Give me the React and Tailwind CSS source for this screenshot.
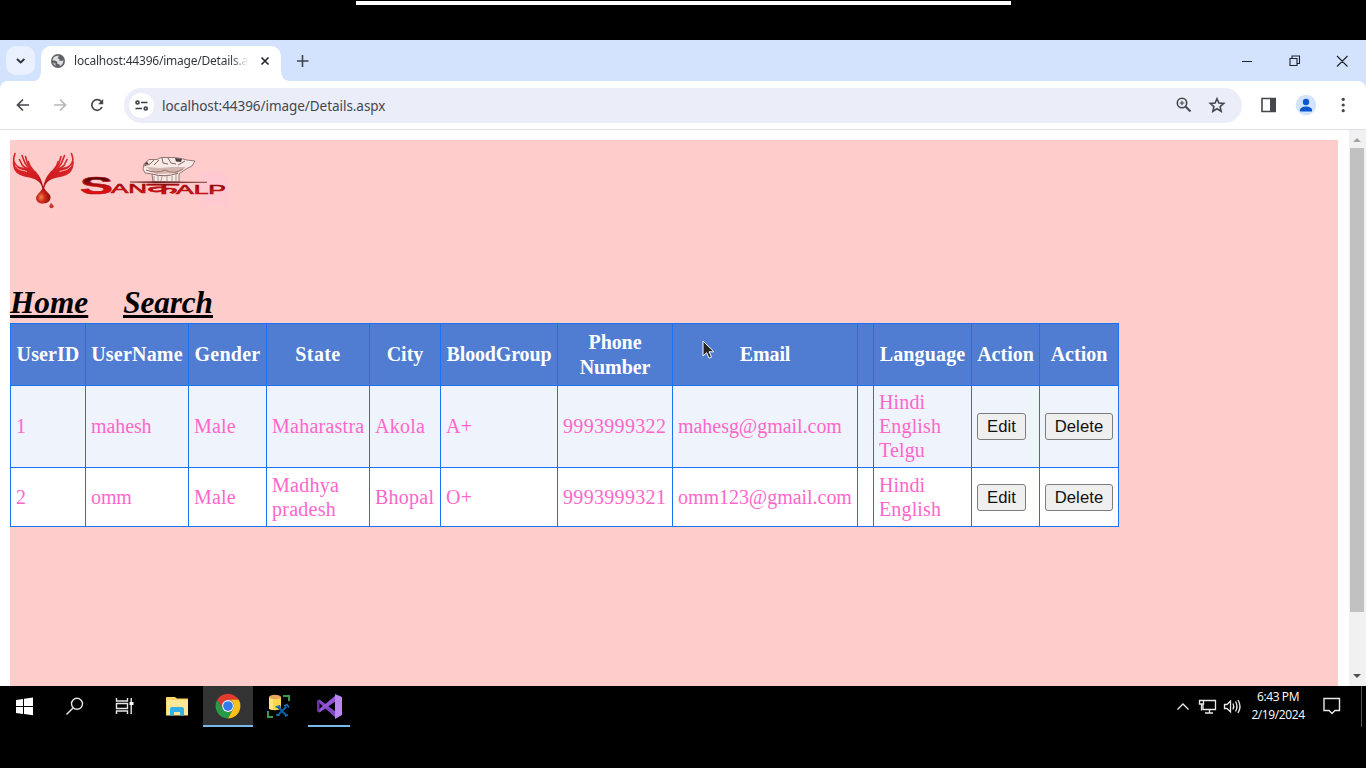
import React from "react";

const columns = [
  { label: "UserID", track: "tracking-[0.1px]" },
  { label: "UserName", track: "tracking-[0.2px]" },
  { label: "Gender", track: "tracking-[0.25px]" },
  { label: "State", track: "tracking-[0.4px]" },
  { label: "City", track: "tracking-[0px]" },
  { label: "BloodGroup", track: "tracking-[-0.15px]" },
  { label: "Phone Number", track: "tracking-[-0.1px]" },
  { label: "Email", track: "tracking-[-0.1px]" },
  { label: "", track: "" },
  { label: "Language", track: "tracking-[0.15px]" },
  { label: "Action", track: "tracking-[0px]" },
  { label: "Action", track: "tracking-[0px]" },
];

const rows = [
  {
    cells: ["1", "mahesh", "Male", "Maharastra", "Akola", "A+", "9993999322", "mahesg@gmail.com", ""],
    languages: ["Hindi", "English", "Telgu"],
    style: "h-[82px] bg-[#eff3fb]",
    pad: "pb-0.5",
  },
  {
    cells: ["2", "omm", "Male", "Madhya pradesh", "Bhopal", "O+", "9993999321", "omm123@gmail.com", ""],
    languages: ["Hindi", "English"],
    style: "h-[59px] bg-white",
    pad: "pb-0",
  },
];

const cellTracking = [
  "tracking-[0px]",
  "tracking-[-0.1px]",
  "tracking-[0.2px]",
  "tracking-[0.25px]",
  "tracking-[0.25px]",
  "tracking-[0.2px]",
  "tracking-[0.32px]",
  "tracking-[-0.04px]",
  "",
];

function Logo() {
  return (
    <svg width="226" height="72" viewBox="8 144 226 72" className="-ml-0.5 block">
      <defs>
        <linearGradient id="hand" x1="0" y1="0" x2="1" y2="1">
          <stop offset="0" stopColor="#e0282c" />
          <stop offset="0.6" stopColor="#cf1c20" />
          <stop offset="1" stopColor="#7d1013" />
        </linearGradient>
        <linearGradient id="word" x1="0" y1="0" x2="0" y2="1">
          <stop offset="0.3" stopColor="#5a0707" />
          <stop offset="0.55" stopColor="#c80c10" />
          <stop offset="0.85" stopColor="#f00d10" />
        </linearGradient>
        <radialGradient id="drop" cx="0.35" cy="0.65" r="0.65">
          <stop offset="0" stopColor="#f08a55" />
          <stop offset="0.4" stopColor="#cf2a18" />
          <stop offset="1" stopColor="#8a0d0c" />
        </radialGradient>
      </defs>
      <rect x="203" y="172" width="25" height="33" fill="#ffc6d6" opacity="0.6" />
      <g id="palm">
        <path d="M12.800 162 C12.800 168 15 173 20 175 C27 178 34 177 39 182 C42 185 43 189 43 196 L44 196 C44 187 42 179 37 173 C34 169 30 167.500 25 167.500 C20 167.500 16.500 166 14.700 161 Z" fill="url(#hand)" />
        <g fill="none" stroke="#d52529" strokeWidth="1.600" strokeLinecap="round">
          <path d="M15 153.500 C13.500 157 13.300 160 13.700 163" />
          <path d="M19.500 159.500 L22.500 165.500 L27 169" />
          <path d="M22 155.500 L25 163 L29 168.500" />
          <path d="M25.500 156.500 L27.500 163.500 L31 169" />
          <path d="M28.300 161.500 L30 166 L33 170" />
        </g>
        <path d="M15.500 165.500 C18 170.500 23 170 27 171.500" fill="none" stroke="#ffb9b9" strokeWidth="1" />
      </g>
      <use href="#palm" transform="matrix(-1 0 0 1 86.500 0)" />
      <path d="M43.500 188 C43 193 36 197 36 200.500 C36.500 205 40 206.500 43.500 206 C48 206 51 203 50.500 199 C50 196 44 193 43.500 188Z" transform="translate(0 -2.500)" fill="url(#drop)" />
      <path d="M51 202.500 C51 204 49.300 205 49.300 206.500 C49.500 208.800 53.500 208.800 53.700 206.200 C53.700 204.800 51.500 204.500 51 202.500Z" fill="#c9382d" />
      <g strokeLinejoin="round">
        <path d="M143 169 L144 164 L149 159.500 L157 159.500 L161 157.500 L174 157.500 L181 158.500 L187 160 L195 161 L192 166 L186 169 L179 174 L179 182 L153 182 L152 174 L145 173 Z" fill="#f7e9e4" stroke="#7b5e5a" strokeWidth="0.8" />
        <path d="M144 166 l6 -2 4 -4 M154 165 l5 -5 M162 158 l1 5 5 1 M168 158 l3 5 5 1 M178 165 l7 -4 M146 170 q10 4 19 0 q9 5 18 -1 M152 174 q13 4 26 -1" fill="none" stroke="#785653" strokeWidth="0.9" />
        <path d="M175 158 L182 159 L181 162 L176 161.500Z M144 165 L147 161.500 L148.500 164Z" fill="#4b4040" />
        <path d="M154 176 v5 M158 176 v5 M162 176 l-1 5 M167 175 v6 M172 176 v5 M176 174 v7" stroke="#9d837f" strokeWidth="0.8" />
        <path d="M146 167 L160 168 L172 167 L186 167 L178 173 L156 174Z" fill="#b28a82" opacity="0.55" />
      </g>
      <path d="M130 182 L155 181.500 L207 182.300 L155 183Z" fill="#6e2020" stroke="#6e2020" strokeWidth="0.5" />
      <g fill="url(#word)" fontFamily="'Liberation Sans', Arial, sans-serif" stroke="#b51114" strokeWidth="0.6">
        <text x="80" y="193.500" fontSize="24" fontWeight="700" textLength="33" lengthAdjust="spacingAndGlyphs">S</text>
        <text x="111" y="193" fontSize="13" textLength="36" lengthAdjust="spacingAndGlyphs">AN</text>
        <text x="147" y="193.500" fontSize="16" fontFamily="'Noto Sans', 'Noto Sans Devanagari', sans-serif" textLength="31" lengthAdjust="spacingAndGlyphs">क</text>
        <text x="176" y="193.500" fontSize="12.500" textLength="50" lengthAdjust="spacingAndGlyphs">ALP</text>
      </g>
    </svg>
  );
}

function ChromeIcon() {
  return (
    <svg width="26" height="26" viewBox="0 0 48 48">
      <path d="M24 13 H43.900 A23 23 0 0 0 4.100 12.500 L14.500 29.500 A11 11 0 0 1 24 13Z" fill="#e33b2e" />
      <path d="M4.100 12.500 A23 23 0 0 0 24 47 L33.500 29.500 A11 11 0 0 1 14.500 29.500Z" fill="#289b49" />
      <path d="M24 47 A23 23 0 0 0 43.900 12.500 H24 A11 11 0 0 1 33.500 29.500Z" fill="#fbc116" />
      <circle cx="24" cy="24" r="11" fill="#fff" />
      <circle cx="24" cy="24" r="9" fill="#317bea" />
    </svg>
  );
}

function TabStrip() {
  return (
    <div className="flex h-[41px] bg-[#d3e3fd] pl-1.5 pt-1.5">
      <button className="flex h-[29px] w-[29px] items-center justify-center rounded-[10px] bg-[#e9f1fe]">
        <svg width="29" height="29" fill="none" stroke="#30343a" strokeWidth="1.9"><path d="M11 13l3.700 3.500L18.400 13" /></svg>
      </button>
      <div className="flex h-[35px] w-[260px]">
        <svg width="6" height="35" className="shrink-0"><path d="M0 35 Q6 33 6 25V35Z" fill="#fff" /></svg>
        <div className="flex h-[35px] w-[240px] items-center rounded-t-[10px] bg-white pb-[5px] pl-2.5">
          <svg width="14" height="14" viewBox="0 0 14 14" className="shrink-0">
            <circle cx="7" cy="7" r="7" fill="#5f6368" />
            <path d="M8 1.700 L6.500 4.200 L8.500 5 L8 6.500 L11 7 L12.300 6 Q12.500 10.500 9 12 L8.500 10.500 L6 9.500 L6.500 8 L4 6.500 L1.600 6.500 Q1.600 2.200 6.500 1.700Z" fill="#fff" opacity="0.8" />
            <path d="M2 8.500 L4.500 9.500 L4.500 12 Q2.500 11 2 8.500Z" fill="#fff" opacity="0.6" />
          </svg>
          <div className="ml-[9px] w-[174px] shrink-0 overflow-hidden whitespace-nowrap bg-gradient-to-r from-[#30343a] from-[90%] to-white bg-clip-text font-['Noto_Sans',sans-serif] text-[12px] leading-[18px] tracking-[-0.22px] text-transparent">localhost:44396/image/Details.aspx</div>
          <svg width="10" height="10" className="ml-[12px] shrink-0" stroke="#202329" strokeWidth="1.6"><path d="M1.500 1.500l7 7M8.500 1.500l-7 7" /></svg>
        </div>
        <svg width="10" height="35" className="shrink-0"><path d="M0 25Q0 35 10 35H0Z" fill="#fff" /></svg>
      </div>
      <svg width="12" height="12" className="mt-[9px] ml-0.5" stroke="#40454c" strokeWidth="1.6"><path d="M0 6h12M6 0v12" transform="translate(-0.500 0)" /></svg>
      <svg width="120" height="30" viewBox="1236 46 120 30" className="ml-auto mr-2.5" fill="none" stroke="#202329" strokeWidth="1.1">
        <path d="M1242 61.500h10M1290 58.500h7v7h-7zM1292 58v-2h7.500v7.500H1297M1337 56l10.500 10.500M1347.500 56L1337 66.500" />
      </svg>
    </div>
  );
}

function Toolbar() {
  return (
    <div className="h-[49px] bg-[#d3e3fd]">
      <div className="flex h-[49px] items-center rounded-t-[8px] border-b border-[#dcdfe3] bg-white">
        <svg width="110" height="48" viewBox="0 81 110 48" fill="none" strokeWidth="1.700" className="shrink-0">
          <path d="M29 105H17.500M23 99.500L17.500 105l5.500 5.500" stroke="#44474b" />
          <path d="M54 105h11.500M60 99.500l5.500 5.500-5.500 5.500" stroke="#b5b7ba" />
          <path d="M101.500 102A5.300 5.300 0 1 0 102 107" stroke="#44474b" />
          <path d="M103.200 99v5.300H98Z" fill="#44474b" />
        </svg>
        <div className="ml-[14px] flex h-[35px] w-[1118px] items-center rounded-full bg-[#ebeef8] pl-[5px]">
          <div className="h-[25px] w-[25px] rounded-full bg-white">
            <svg width="25" height="25" fill="none" stroke="#3c4045" strokeWidth="1.7">
              <circle cx="8.500" cy="9.500" r="1.500" /><path d="M12 9.500h6.500M6.500 15.500H13" /><circle cx="16.700" cy="15.500" r="1.500" />
            </svg>
          </div>
          <span className="ml-[8px] whitespace-nowrap pt-px font-['Noto_Sans',sans-serif] text-[13.5px] leading-5 tracking-[-0.05px] text-[#44474d]">localhost:44396/image/Details.aspx</span>
          <svg width="56" height="24" viewBox="1174 93 56 24" className="ml-auto mr-[12px]" fill="none" stroke="#44474b" strokeWidth="1.600">
            <circle cx="1182" cy="103" r="4.700" /><path d="M1185.500 106.500l5 5" strokeWidth="2" /><path d="M1179.700 103h4.600M1182 100.700v4.600" strokeWidth="1.200" />
            <path d="M1217 98.700l1.900 4.400 4.800.4-3.600 3.100 1.100 4.700-4.200-2.500-4.200 2.500 1.100-4.700-3.600-3.100 4.800-.4z" />
          </svg>
        </div>
        <svg width="100" height="34" viewBox="1254 88 100 34" className="ml-3">
          <path d="M1262 98.500h13v13h-13z" fill="none" stroke="#44474b" strokeWidth="1.600" /><path d="M1270 98h6v14h-6z" fill="#44474b" />
          <circle cx="1306" cy="105" r="10.300" fill="#d3e3fd" />
          <circle cx="1306" cy="102" r="3.200" fill="#0b57d0" /><path d="M1300 111.500v-1.500c0-2 3-3.500 6-3.500s6 1.500 6 3.500v1.500z" fill="#0b57d0" />
          <g fill="#44474b"><circle cx="1343.200" cy="99.300" r="1.600" /><circle cx="1343.200" cy="105" r="1.600" /><circle cx="1343.200" cy="110.700" r="1.600" /></g>
        </svg>
      </div>
    </div>
  );
}

function ActionButton({ children, width }) {
  return (
    <button className={`${width} block h-[27px] rounded-[3px] border border-[#7d7d7d] bg-[#efefef] text-center font-['Liberation_Sans',sans-serif] text-[16.67px] leading-[25px] tracking-[0.1px] text-[#111111]`}>
      {children}
    </button>
  );
}

function UsersTable() {
  const cell = "border border-[#1a73f5]";
  return (
    <table className="w-[1109px] table-fixed border-collapse text-[20px]">
      <colgroup>
        <col className="w-[75px]" /><col className="w-[103px]" /><col className="w-[78px]" /><col className="w-[103px]" />
        <col className="w-[71px]" /><col className="w-[117px]" /><col className="w-[115px]" /><col className="w-[185px]" />
        <col className="w-[16px]" /><col className="w-[98px]" /><col className="w-[68px]" /><col className="w-[79px]" />
      </colgroup>
      <thead>
        <tr className="h-[62px] bg-[#507cd1] text-white">
          {columns.map((c, i) => (
            <th key={i} className={`${cell} ${c.track} p-0 text-center font-bold leading-[25px]`}>{c.label}</th>
          ))}
        </tr>
      </thead>
      <tbody className="text-[#ff66cc]">
        {rows.map((r) => (
          <tr key={r.cells[0]} className={r.style}>
            {r.cells.map((c, i) => (
              <td key={i} className={`${cell} ${cellTracking[i]} ${r.pad} px-[5px] pt-0 leading-6`}>{c}</td>
            ))}
            <td className={`${cell} ${r.pad} px-[5px] pt-0 leading-6 tracking-[0.15px]`}>
              {r.languages.map((l) => <div key={l}>{l}</div>)}
            </td>
            <td className={`${cell} py-0 pl-[5px] pr-0`}><ActionButton width="w-[49px]">Edit</ActionButton></td>
            <td className={`${cell} py-0 pl-[5px] pr-0`}><ActionButton width="w-[68px]">Delete</ActionButton></td>
          </tr>
        ))}
      </tbody>
    </table>
  );
}

function Cursor() {
  return (
    <svg width="14" height="20" viewBox="0 0 14 20" className="absolute left-[702px] top-[210px]">
      <path d="M1 1v15l3.600-3.300 2.500 5.500 2.400-1.100-2.500-5.300h5z" fill="#252525" stroke="#fff" strokeWidth="1" />
    </svg>
  );
}

function Page() {
  return (
    <div className="relative flex h-[556px] bg-white font-['Liberation_Serif',serif]">
      <div className="ml-2.5 mt-2.5 h-[546px] w-[1328px] bg-[#ffcccc]">
        <div className="h-[143px] pt-1"><Logo /></div>
        <nav className="flex h-[40px] items-start gap-[35px] text-[31.25px] font-bold italic leading-[40px] text-black underline decoration-[3px] underline-offset-[2px]">
          <a>Home</a>
          <a className="tracking-[-0.1px]">Search</a>
        </nav>
        <UsersTable />
      </div>
      <div className="ml-[11px] flex w-[17px] flex-col items-start bg-[#f1f1f1] pl-px">
        <svg width="16" height="18"><path d="M3 12l4-4 4 4z" fill="#a3a3a3" /></svg>
        <div className="h-[464px] w-[14px] bg-[#c1c1c1]" />
        <svg width="16" height="18" className="mt-auto"><path d="M3 6l4 4 4-4z" fill="#505050" /></svg>
      </div>
      <Cursor />
    </div>
  );
}

function Taskbar() {
  return (
    <div className="flex h-[41px] items-center bg-black text-white">
      <svg width="203" height="41" viewBox="0 686 203 41" className="shrink-0">
        <path d="M16 700l7-1v7h-7zM24 698.800l9-1.300V706h-9zM16 707h7v7l-7-1zM24 707h9v8.300l-9-1.300z" fill="#fff" />
        <g fill="none" stroke="#e8e8e8" strokeWidth="1.400">
          <circle cx="77" cy="703.800" r="5.500" /><path d="M73 708l-6.500 6.500" />
          <path d="M116.500 698v3h11v-3M116.500 714v-3h11v3M116.500 703.500h11v5h-11zM131.200 698v16" />
        </g>
        <path d="M129.500 702h4v3h-4z" fill="#fff" />
        <path d="M166 698q0-1 1-1h8l2 1.500h11v17h-22z" fill="#fbd867" /><path d="M167 700h21v15h-21z" fill="#ffe79a" />
        <path d="M170 715.500v-6.500q0-2 2-2h10q2 0 2 2v6.500h-4v-3.500h-6v3.500z" fill="#35afe5" />
      </svg>
      <div className="flex h-[41px] w-[50px] shrink-0 items-center justify-center border-b-2 border-[#76b9ed] bg-[#333333]">
        <ChromeIcon />
      </div>
      <svg width="53" height="41" viewBox="253 686 53 41" className="shrink-0">
        <path d="M283 696h6v5M268 711v6h5" fill="none" stroke="#3f9848" strokeWidth="2" />
        <path d="M269 697v11c1 3 11 3 12 0v-11z" fill="#fbd64e" /><path d="M269 697v12l4 1v-12z" fill="#ffe57a" />
        <ellipse cx="275" cy="697" rx="6" ry="2.200" fill="#e6a45d" />
        <path d="M277.500 706.500l9 9M286.500 706.500l-9 9" stroke="#0f5c9c" strokeWidth="2.200" /><path d="M275.500 707l4-1 1 3M284 706l3-1.500 2 3M276 715h4M285 716l3-1" stroke="#1670b5" strokeWidth="1.500" fill="none" />
      </svg>
      <div className="ml-[2px] h-[41px] w-[42px] border-b-2 border-[#76b9ed]">
        <svg width="42" height="39" viewBox="308 686 42 39">
          <path d="M317 701l2.500-1.500L336 712v6z" fill="#8147c6" />
          <path d="M317 711l2.500 1.500L336 701v-6z" fill="#9455d6" />
          <path d="M317 701l2.500-1.500v13L317 711z" fill="#69369f" />
          <path d="M335 694l7 3v18l-7 4z" fill="#b986f2" />
        </svg>
      </div>
      <svg width="76" height="30" viewBox="1172 692 76 30" className="ml-auto" fill="none" stroke="#e8e8e8" strokeWidth="1.300">
        <path d="M1177.500 709.500l5.500-5.500 5.500 5.500" />
        <path d="M1204 700.500h11.500v9H1203v-5M1199.500 700.500h4v3.500h-4zM1201.500 704v6.500M1205 713h8M1209.500 710v3" />
        <path d="M1224.500 704.500h2.500l3.500-3.500v11l-3.500-3.500h-2.500zM1233 703.500q1.500 3 0 6M1235.500 701.500q3 5 0 10M1238 700q4 6.500 0 13" />
      </svg>
      <div className="-mt-0.5 w-[60px] whitespace-nowrap text-center font-['Open_Sans',sans-serif] text-[12px] leading-[18px] tracking-[-0.4px]">
        <div>6:43 PM</div>
        <div>2/19/2024</div>
      </div>
      <svg width="36" height="30" viewBox="1314 692 36 30" className="ml-[6px] mr-[11px]" fill="none" stroke="#e8e8e8" strokeWidth="1.400">
        <path d="M1324 698.500h15.500v12h-4.500l-3 3-3-3h-5z" />
      </svg>
      <div className="mr-1 h-[41px] w-px bg-[#555]" />
    </div>
  );
}

export default function App() {
  return (
    <div className="h-[768px] w-[1366px] overflow-hidden bg-black">
      <div className="flex h-10 pl-[356px]">
        <div className="mt-px h-[4px] w-[655px] bg-white" />
      </div>
      <TabStrip />
      <Toolbar />
      <Page />
      <Taskbar />
    </div>
  );
}
